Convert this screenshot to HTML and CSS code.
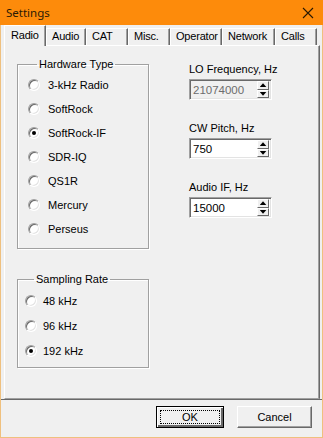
FILE: index.html
```html
<!DOCTYPE html>
<html>

<head>
    <meta charset="UTF-8">
    <title>Settings</title>
    <link rel="stylesheet" href="styles.css">
</head>

<body>
    <div class="window">
        <div class="titleBar">
            <span class="title">Settings</span>
            <svg class="closeIcon" width="12" height="12" viewBox="0 0 12 12">
                <path d="M1 1 L11 11 M11 1 L1 11" stroke="#2a1a05" stroke-width="1.1" fill="none" />
            </svg>
        </div>

        <div class="client">
            <div class="tabs">
                <div class="tab active tabRadio">Radio</div>
                <div class="tab tabAudio">Audio</div>
                <div class="tab tabCat">CAT</div>
                <div class="tab tabMisc">Misc.</div>
                <div class="tab tabOperator">Operator</div>
                <div class="tab tabNetwork">Network</div>
                <div class="tab tabCalls">Calls</div>
            </div>

            <div class="panel">
                <div class="leftColumn">
                    <fieldset class="group hardwareGroup">
                        <legend>Hardware Type</legend>
                        <div class="radio"><span class="circle"></span>3-kHz Radio</div>
                        <div class="radio"><span class="circle"></span>SoftRock</div>
                        <div class="radio"><span class="circle checked"></span>SoftRock-IF</div>
                        <div class="radio"><span class="circle"></span>SDR-IQ</div>
                        <div class="radio"><span class="circle"></span>QS1R</div>
                        <div class="radio"><span class="circle"></span>Mercury</div>
                        <div class="radio"><span class="circle"></span>Perseus</div>
                    </fieldset>

                    <fieldset class="group rateGroup">
                        <legend>Sampling Rate</legend>
                        <div class="radio"><span class="circle"></span>48 kHz</div>
                        <div class="radio"><span class="circle"></span>96 kHz</div>
                        <div class="radio"><span class="circle checked"></span>192 kHz</div>
                    </fieldset>
                </div>

                <div class="rightColumn">
                    <div class="field">
                        <div class="fieldLabel">LO Frequency, Hz</div>
                        <div class="spinBox disabled">
                            <span class="spinValue">21074000</span>
                            <span class="spinButtons"><span class="spinUp"></span><span class="spinDown"></span></span>
                        </div>
                    </div>
                    <div class="field">
                        <div class="fieldLabel">CW Pitch, Hz</div>
                        <div class="spinBox">
                            <span class="spinValue">750</span>
                            <span class="spinButtons"><span class="spinUp"></span><span class="spinDown"></span></span>
                        </div>
                    </div>
                    <div class="field">
                        <div class="fieldLabel">Audio IF, Hz</div>
                        <div class="spinBox">
                            <span class="spinValue">15000</span>
                            <span class="spinButtons"><span class="spinUp"></span><span class="spinDown"></span></span>
                        </div>
                    </div>
                </div>
            </div>

            <div class="buttonBar">
                <button class="button defaultButton"><span class="focusRect">OK</span></button>
                <button class="button cancelButton">Cancel</button>
            </div>
        </div>
    </div>
</body>

</html>
```

FILE: styles.css
```css
* {
    margin: 0;
    padding: 0;
    box-sizing: border-box;
}

body {
    font-family: "Liberation Sans", Arial, sans-serif;
    font-size: 11px;
    color: #000;
    background-color: #f0f0f0;
}

/* Window frame */
.window {
    width: 323px;
    height: 438px;
    display: flex;
    flex-direction: column;
    border: 1px solid #efc07e;
    border-top: none;
    background-color: #f0f0f0;
}

.titleBar {
    height: 25px;
    margin: 0 -1px;
    background-color: #fd8b0b;
    display: flex;
    align-items: center;
    justify-content: space-between;
    padding: 0 9px 0 6px;
}

.title {
    font-family: "Noto Sans", sans-serif;
    font-size: 11.5px;
    color: #2a1a05;
}

.closeIcon {
    display: block;
}

.client {
    flex: 1;
    display: flex;
    flex-direction: column;
}

/* Tabs */
.tabs {
    height: 20px;
    display: flex;
    align-items: flex-end;
    padding-left: 3px;
}

.tab {
    height: 17px;
    padding-left: 5px;
    line-height: 15px;
    letter-spacing: -0.2px;
    border: 1px solid #fff;
    border-bottom: none;
    border-right-color: #696969;
    box-shadow: inset -1px 0 0 #a0a0a0;
    background-color: #f0f0f0;
    white-space: nowrap;
    overflow: hidden;
}

.tab.active {
    height: 21px;
    margin-bottom: -1px;
    padding-left: 6px;
    line-height: 19px;
    position: relative;
    z-index: 1;
}

.tabRadio { width: 42px; }
.tabAudio { width: 40px; }
.tabCat { width: 42px; }
.tabMisc { width: 42px; }
.tabOperator { width: 52px; }
.tabNetwork { width: 53px; }
.tabCalls { width: 42px; }

/* Tab page */
.panel {
    height: 354px;
    margin: 0 2px 0 3px;
    border: 1px solid #fff;
    border-right-color: #696969;
    border-bottom-color: #a0a0a0;
    box-shadow: inset -1px 0 0 #a0a0a0;
    display: flex;
    padding: 12px 0 0 12px;
}

.leftColumn {
    width: 132px;
    display: flex;
    flex-direction: column;
}

.group {
    border: 1px solid #a0a0a0;
    box-shadow: inset 1px 1px 0 #fff, 1px 1px 0 #fff;
}

.group legend {
    margin-left: 9px;
    padding: 0 2px;
    line-height: 13px;
}

.hardwareGroup {
    padding: 2px 10px 7px;
}

.hardwareGroup .radio {
    height: 24px;
}

.hardwareGroup .circle {
    margin-right: 8px;
}

.rateGroup {
    margin-top: 24px;
    padding: 2px 7px 4px;
}

.rateGroup .radio {
    height: 25px;
}

.rateGroup .circle {
    margin-right: 6px;
}

.radio {
    display: flex;
    align-items: center;
}

.circle {
    width: 12px;
    height: 12px;
    border-radius: 50%;
    background-color: #fff;
    border: 1px solid;
    border-color: #a0a0a0 #fff #fff #a0a0a0;
    box-shadow: inset 1px 1px 0 #696969, inset -1px -1px 0 #e3e3e3;
    display: flex;
    align-items: center;
    justify-content: center;
}

.circle.checked::after {
    content: "";
    width: 4px;
    height: 4px;
    border-radius: 50%;
    background-color: #000;
}

/* Number fields */
.rightColumn {
    margin-left: 40px;
    padding-top: 5px;
    display: flex;
    flex-direction: column;
    gap: 22px;
}

.fieldLabel {
    line-height: 13px;
    margin-bottom: 3px;
}

.spinBox {
    width: 83px;
    height: 21px;
    background-color: #fff;
    border: 1px solid;
    border-color: #a0a0a0 #fff #fff #a0a0a0;
    box-shadow: inset 1px 1px 0 #696969, inset -1px -1px 0 #e3e3e3;
    display: flex;
    align-items: center;
    padding: 1px 1px 1px 3px;
}

.spinBox.disabled {
    background-color: #f0f0f0;
    color: #6d6d6d;
}

.spinValue {
    flex: 1;
    font-size: 11.5px;
}

.spinButtons {
    width: 12px;
    height: 17px;
    margin-right: 1px;
    display: flex;
    flex-direction: column;
}

.spinUp,
.spinDown {
    flex: 1;
    background-color: #f0f0f0;
    border: 1px solid;
    border-color: #fff #696969 #696969 #fff;
    display: flex;
    align-items: center;
    justify-content: center;
}

.spinUp::after,
.spinDown::after {
    content: "";
    width: 7px;
    height: 4px;
    background-color: #000;
}

.spinUp::after {
    clip-path: polygon(50% 0, 100% 100%, 0 100%);
}

.spinDown::after {
    clip-path: polygon(0 0, 100% 0, 50% 100%);
}

/* Bottom buttons */
.buttonBar {
    flex: 1;
    border-top: 1px solid #696969;
    display: flex;
    justify-content: flex-end;
    align-items: flex-start;
    gap: 13px;
    padding: 6px 10px 0 0;
}

.button {
    height: 22px;
    font-family: "Liberation Sans", Arial, sans-serif;
    font-size: 11px;
    color: #000;
    background-color: #f0f0f0;
    border: 1px solid;
    border-color: #fff #696969 #696969 #fff;
    box-shadow: inset -1px -1px 0 #a0a0a0;
}

.defaultButton {
    width: 68px;
    border: 1px solid #000;
    box-shadow: inset 1px 1px 0 #fff, inset -2px -2px 0 #696969;
    padding: 3px;
    display: flex;
}

.focusRect {
    flex: 1;
    border: 1px dotted #000;
    display: flex;
    align-items: center;
    justify-content: center;
}

.cancelButton {
    width: 75px;
}
```
